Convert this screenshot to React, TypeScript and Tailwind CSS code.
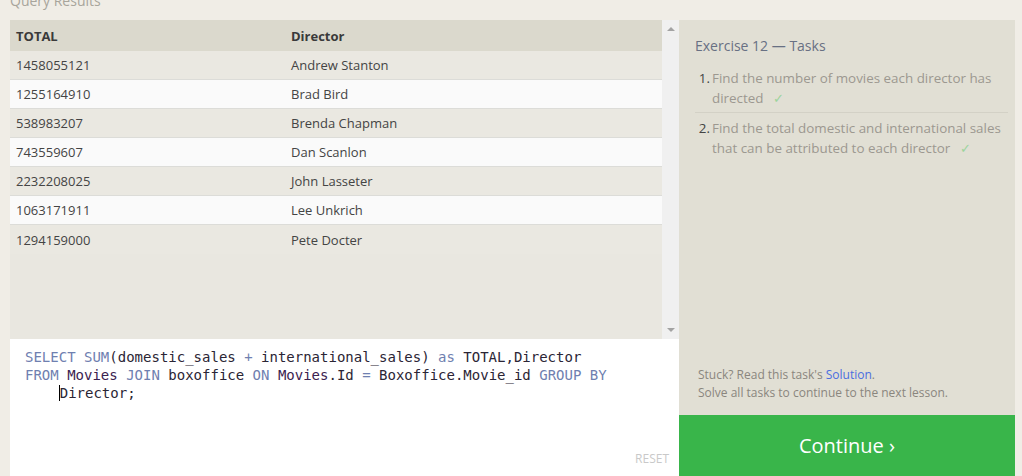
import React from "react";

const rows: [string, string][] = [
  ["1458055121", "Andrew Stanton"],
  ["1255164910", "Brad Bird"],
  ["538983207", "Brenda Chapman"],
  ["743559607", "Dan Scanlon"],
  ["2232208025", "John Lasseter"],
  ["1063171911", "Lee Unkrich"],
  ["1294159000", "Pete Docter"],
];

const K = ({ children }: { children: React.ReactNode }) => (
  <span className="text-[#6f80b0]">{children}</span>
);

export default function App() {
  return (
    <div
      className="w-[1022px] h-[476px] bg-[#f0ede6] overflow-hidden flex flex-col"
      style={{ fontFamily: '"Open Sans", "Noto Sans", sans-serif' }}
    >
      <div className="h-[20px] pl-[10px] text-[14px] leading-[20px] text-[#a8a59c] -mt-[9px] shrink-0">
        Query Results
      </div>
      <div className="flex flex-1 min-h-0 mt-[9px]">
        {/* left panel */}
        <div className="ml-[10px] w-[669px] flex flex-col">
          <div className="h-[319px] flex bg-[#e9e7e0]">
            <div className="w-[652px] text-[13px]">
              <div className="flex h-[31px] items-center pt-[2px] bg-[#dbd9cd] font-bold text-[#3a3a3a]">
                <div className="w-[281px] pl-[6px]">TOTAL</div>
                <div>Director</div>
              </div>
              {rows.map(([t, d], i) => (
                <div
                  key={t}
                  className={`flex h-[29px] items-center pt-[2px] text-[#444] ${
                    i < rows.length - 1 ? "border-b border-[#dcdcd8]" : ""
                  } ${i % 2 === 0 ? "bg-[#eae8e1]" : "bg-[#fafafa]"}`}
                >
                  <div className="w-[281px] pl-[6px]">{t}</div>
                  <div>{d}</div>
                </div>
              ))}
            </div>
            <div className="w-[17px] bg-[#f0f0f0] flex flex-col items-center justify-between py-[7px]">
              <div className="w-0 h-0 border-l-[4px] border-r-[4px] border-b-[4px] border-l-transparent border-r-transparent border-b-[#a3a3a3]" />
              <div className="w-0 h-0 border-l-[4px] border-r-[4px] border-t-[4px] border-l-transparent border-r-transparent border-t-[#a3a3a3]" />
            </div>
          </div>
          <div className="flex-1 bg-white relative">
            <div
              className="pl-[15px] pt-[9px] text-[14px] leading-[18px] text-[#2b2535] whitespace-pre"
              style={{ fontFamily: '"DejaVu Sans Mono", "Liberation Mono", monospace' }}
            >
              <div>
                <K>SELECT</K> <K>SUM</K>(domestic_sales <K>+</K> international_sales) <K>as</K> TOTAL,Director
              </div>
              <div>
                <K>FROM</K> <span className="text-[#3b2250]">Movies</span> <K>JOIN</K> boxoffice <K>ON</K>{" "}
                <span className="text-[#3b2250]">Movies</span>.Id <K>=</K> Boxoffice.Movie_id <K>GROUP</K> <K>BY</K>
              </div>
              <div>
                {"    "}
                <span className="border-l border-black">Director;</span>
              </div>
            </div>
            <div className="absolute right-[10px] bottom-[8px] text-[12px] text-[#c9c9c9]">RESET</div>
          </div>
        </div>
        {/* right panel */}
        <div className="w-[336px] flex flex-col">
          <div className="flex-1 bg-[#e1dfd4] pl-[16px] pr-[7px] pt-[16px] flex flex-col">
            <div className="text-[14px] leading-[20px] text-[#687083]">Exercise 12 — Tasks</div>
            <ol className="mt-[12px] text-[13.4px] leading-[20px] text-[#9c9890]">
              <li className="flex pb-[4px] border-b border-[#d3d1c6]">
                <span className="w-[17px] shrink-0 text-[#444] text-right pr-[2px]">1.</span>
                <span className="pr-[4px]">
                  Find the number of movies each director has directed
                  <span className="inline-block text-[#9cd49c] ml-[10px]">✓</span>
                </span>
              </li>
              <li className="flex pt-[5px]">
                <span className="w-[17px] shrink-0 text-[#444] text-right pr-[2px]">2.</span>
                <span>
                  Find the total domestic and international sales that can be attributed to each director
                  <span className="inline-block text-[#9cd49c] ml-[10px]">✓</span>
                </span>
              </li>
            </ol>
            <div className="mt-auto pb-[13px] pl-[3px] text-[12px] leading-[18px] text-[#8a867e]">
              <div>
                Stuck? Read this task's <span className="text-[#4a6ee0]">Solution</span>.
              </div>
              <div>Solve all tasks to continue to the next lesson.</div>
            </div>
          </div>
          <div className="h-[61px] bg-[#39b54a] flex items-center justify-center text-white text-[20px]">
            Continue ›
          </div>
        </div>
      </div>
    </div>
  );
}
